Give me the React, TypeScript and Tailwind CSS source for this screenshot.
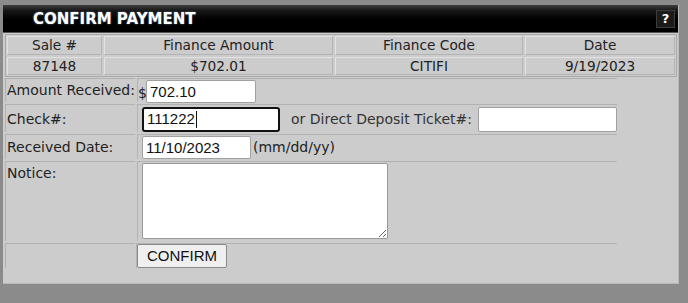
import React from "react";

const label = "font-['DejaVu_Sans',Verdana,sans-serif] text-[14px] text-[#222]";
const head = "font-['DejaVu_Sans',Verdana,sans-serif] text-[13.7px] text-[#222]";
const inputFont = "font-['Liberation_Sans',Arial,sans-serif] text-[15px] text-[#111]";

export default function App() {
  return (
    <div className="w-[688px] h-[303px] bg-[#8b8b8b] pt-[5px] pl-[3px] overflow-hidden">
      <div className="w-[676px] h-[279px] bg-[#cccccc] border-r border-b border-[#b8b8b8] flex flex-col">
        {/* Title bar */}
        <div className="h-[28px] flex items-center justify-between bg-[linear-gradient(#3e3e3e_0%,#151515_22%,#000000_55%,#000000_100%)] border-b border-[#555]">
          <div className="pl-[30px] pt-[1px] font-['DejaVu_Sans',Verdana,sans-serif] font-bold text-[15px] text-white [text-shadow:0_0_2px_rgba(160,200,255,0.6)]">
            CONFIRM PAYMENT
          </div>
          <div className="mr-[3px] w-[19px] h-[18px] bg-[#1b1b1b] border border-[#3d3d3d] flex items-center justify-center font-['DejaVu_Sans',Verdana,sans-serif] font-bold text-[13px] text-white leading-none">
            ?
          </div>
        </div>

        {/* Header table */}
        <div className="ml-[2px] mt-[1px] w-[672px] border border-[#aaaaaa] p-[1px] flex flex-col gap-[2px]">
          <div className="grid grid-cols-[95px_229px_188px_150px] gap-[2px]">
            {["Sale #", "Finance Amount", "Finance Code", "Date"].map((t) => (
              <div key={t} className={`h-[19px] border border-[#b4b4b4] border-t-[#e2e2e2] border-l-[#e2e2e2] flex items-center justify-center ${head}`}>
                {t}
              </div>
            ))}
          </div>
          <div className="grid grid-cols-[95px_229px_188px_150px] gap-[2px]">
            {["87148", "$702.01", "CITIFI", "9/19/2023"].map((t) => (
              <div key={t} className={`h-[18px] border border-[#b4b4b4] border-t-[#e2e2e2] border-l-[#e2e2e2] flex items-center justify-center ${head}`}>
                {t}
              </div>
            ))}
          </div>
        </div>

        {/* Form */}
        <div className="ml-[2px] mt-[1px] grid grid-cols-[130px_480px] grid-rows-[24px_28px_25px_80px_25px] gap-[2px]">
          {/* Row 1 */}
          <div className={`border-t border-l border-[#b2b2b2] pl-[1px] flex items-center ${label}`}>Amount Received:</div>
          <div className="border-t border-l border-[#b2b2b2] flex items-start pt-[1px]">
            <span className={`${label} mt-[3px] w-[8px]`}>$</span>
            <input
              defaultValue="702.10"
              className={`${inputFont} w-[110px] h-[23px] bg-white border border-[#a0a0a0] rounded-[2px] px-[3px] outline-none`}
            />
          </div>

          {/* Row 2 */}
          <div className={`border-t border-l border-[#b2b2b2] pl-[1px] flex items-center pt-[2px] ${label}`}>Check#:</div>
          <div className="border-t border-l border-[#b2b2b2] flex items-center pl-[4px] pt-[2px]">
            <div className={`${inputFont} w-[138px] h-[25px] bg-white border-2 border-[#111] rounded-[3px] pl-[3px] flex items-center`}>
              111222<span className="inline-block w-px h-[17px] bg-[#111] ml-px" />
            </div>
            <span className={`${label} ml-[11px] text-[#333]`}>or Direct Deposit Ticket#:</span>
            <input className={`${inputFont} ml-[6px] w-[139px] h-[25px] bg-white border border-[#a0a0a0] rounded-[2px] outline-none`} />
          </div>

          {/* Row 3 */}
          <div className={`border-t border-l border-[#b2b2b2] pl-[1px] flex items-center ${label}`}>Received Date:</div>
          <div className="border-t border-l border-[#b2b2b2] flex items-center pl-[4px]">
            <input
              defaultValue="11/10/2023"
              className={`${inputFont} w-[109px] h-[23px] bg-white border border-[#a0a0a0] rounded-[2px] px-[3px] outline-none`}
            />
            <span className={`${label} ml-[2px]`}>(mm/dd/yy)</span>
          </div>

          {/* Row 4 */}
          <div className={`border-t border-l border-[#b2b2b2] pl-[1px] pt-[1px] ${label}`}>Notice:</div>
          <div className="border-t border-l border-[#b2b2b2] pl-[4px] pt-[1px]">
            <textarea className="block w-[246px] h-[76px] bg-white border border-[#999] rounded-[2px] outline-none" />
          </div>

          {/* Row 5 */}
          <div className="border-t border-l border-[#b2b2b2]" />
          <div className="border-t border-l border-[#b2b2b2] -ml-px">
            <button className="w-[90px] h-[24px] bg-[#efefef] border border-[#8a8a8a] rounded-[2px] font-['Liberation_Sans',Arial,sans-serif] text-[15px] text-[#111] flex items-center justify-center">
              CONFIRM
            </button>
          </div>
        </div>
      </div>
    </div>
  );
}
